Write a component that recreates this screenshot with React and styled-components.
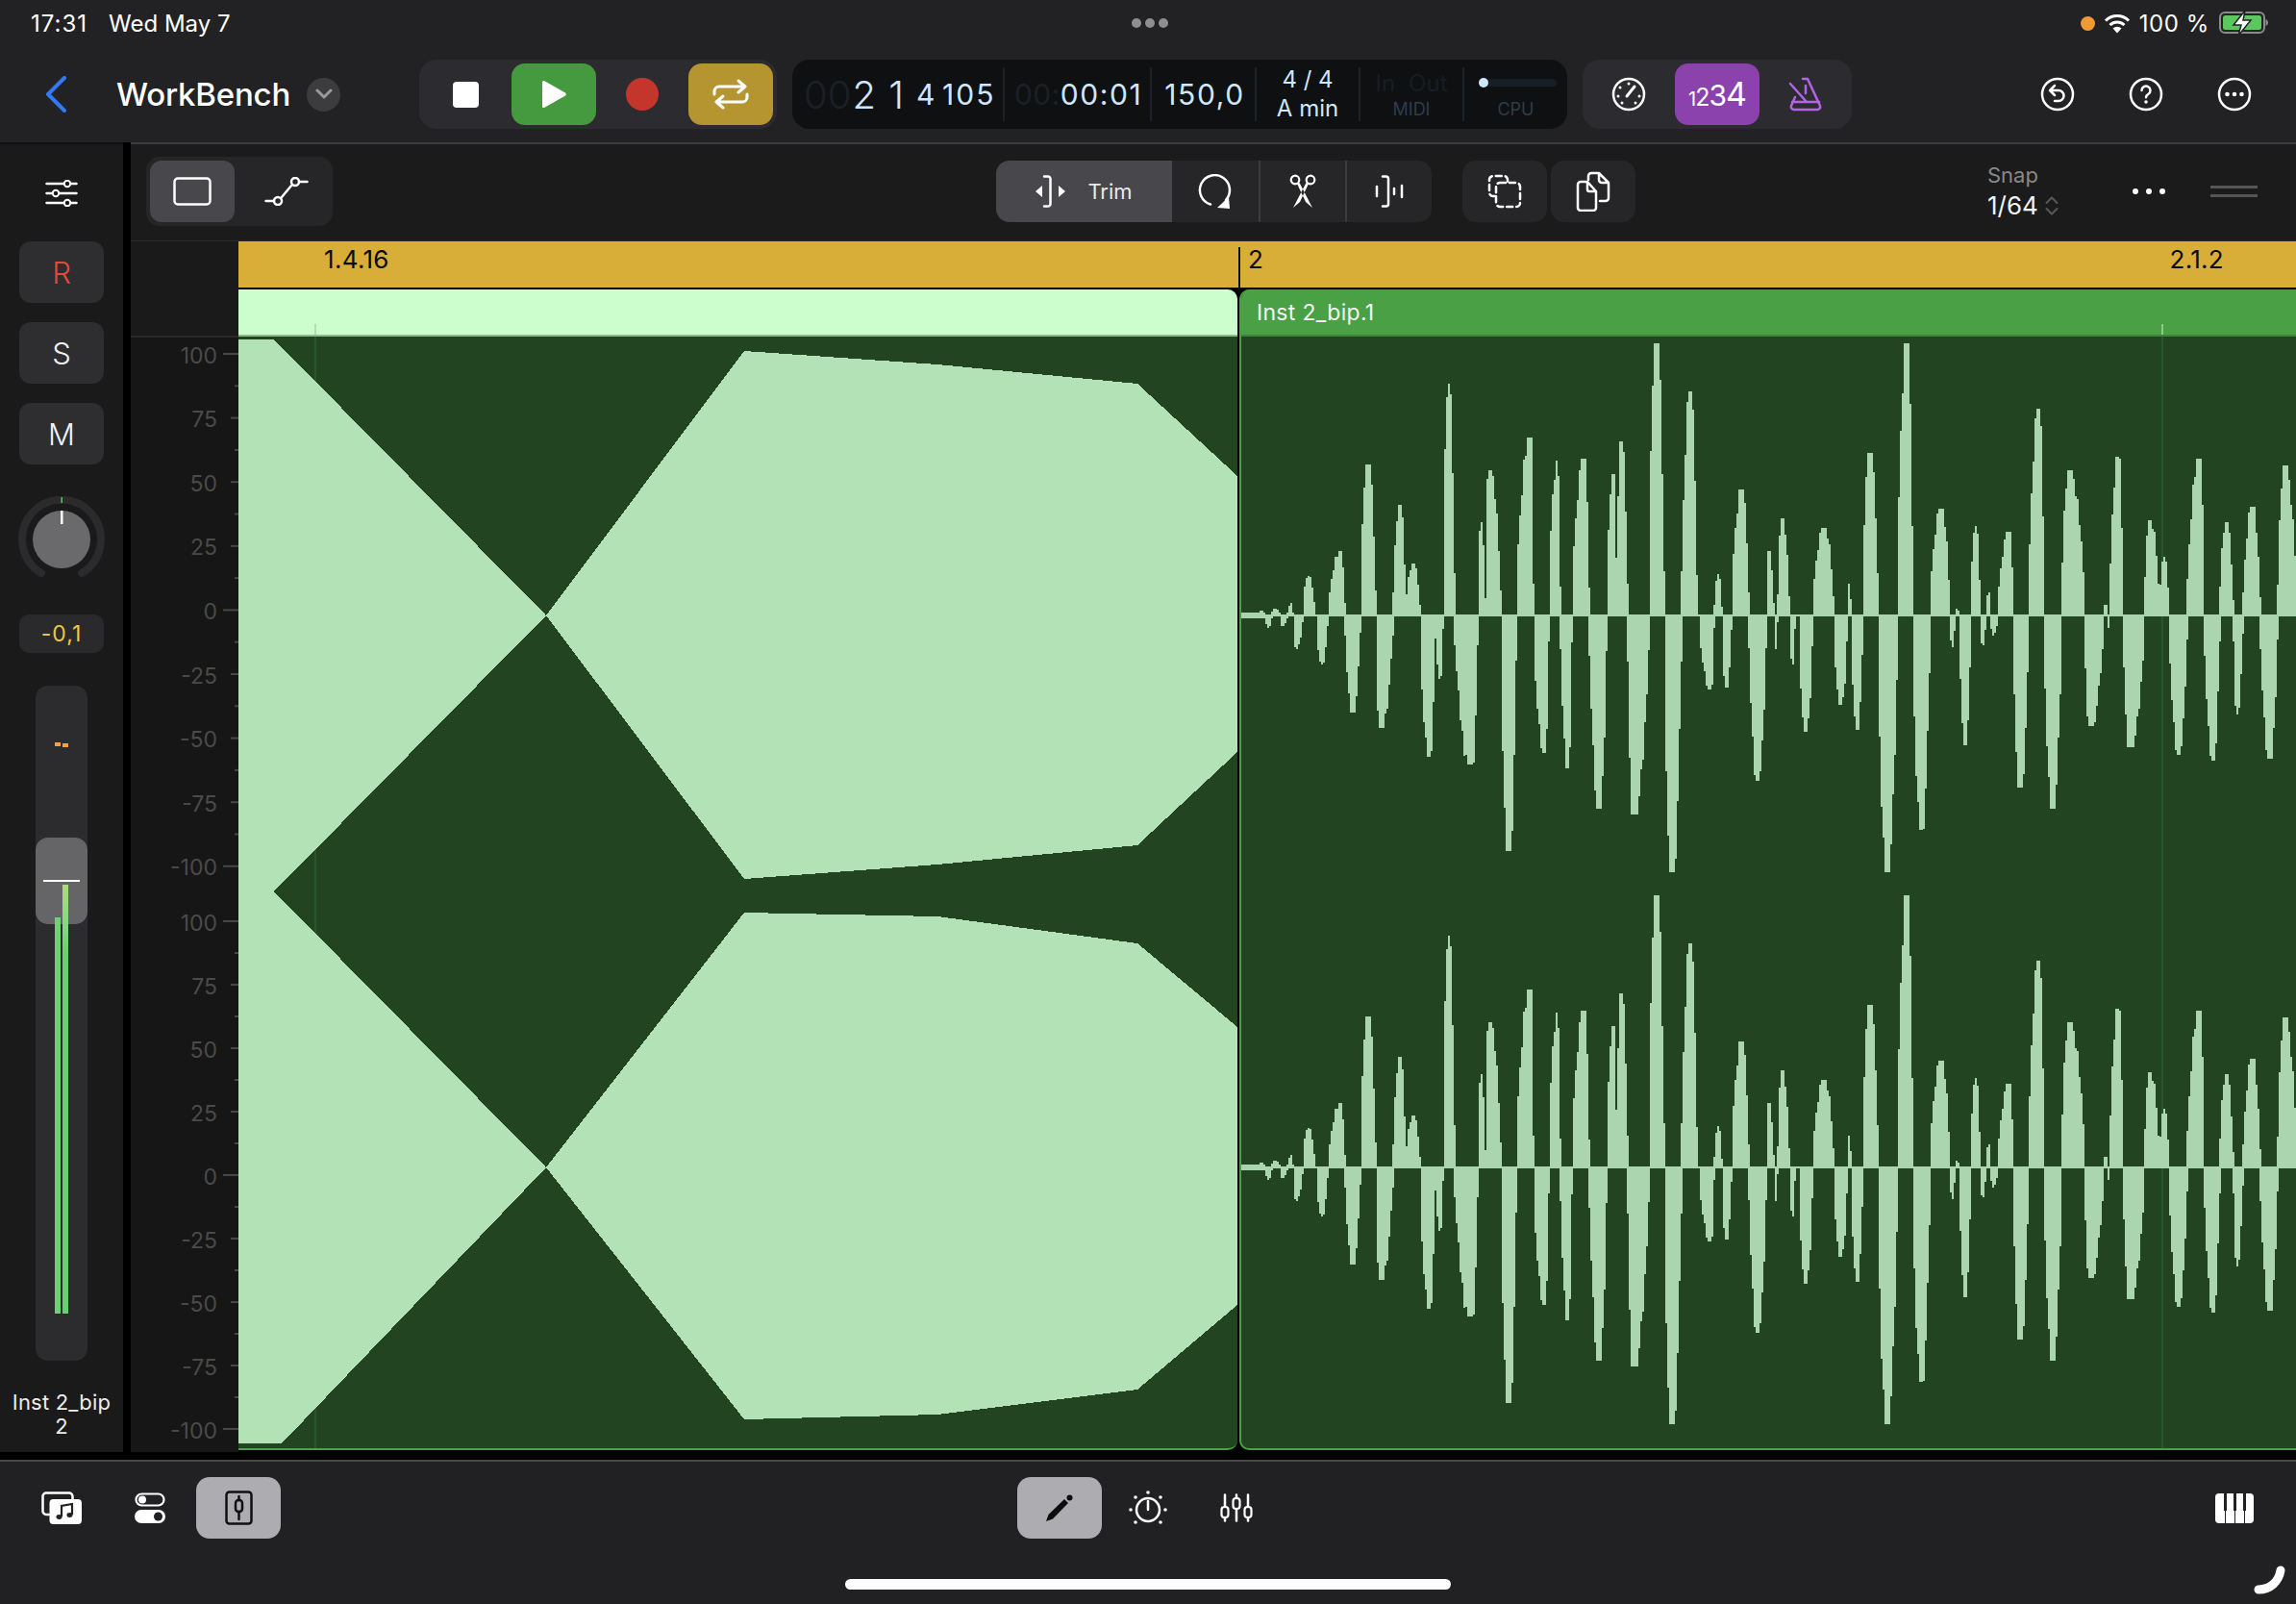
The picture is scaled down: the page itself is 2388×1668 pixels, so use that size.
import React from 'react'
import styled, { createGlobalStyle } from 'styled-components'

const GlobalStyle = createGlobalStyle`
  html, body { margin: 0; padding: 0; background: #000; }
  * { box-sizing: border-box; }
  body { font-family: Inter, "Noto Sans", "Liberation Sans", sans-serif; }
`

const Page = styled.div`
  width: 2388px;
  height: 1668px;
  position: relative;
  overflow: hidden;
  background: #000;
  display: flex;
  flex-direction: column;
  color: #fff;
`

/* ---------- top bar ---------- */
const TopBar = styled.header`
  height: 148px;
  flex: none;
  background: #222224;
`
const StatusRow = styled.div`
  height: 48px;
  padding: 0 28px 0 32px;
  display: grid;
  grid-template-columns: 1fr auto 1fr;
  align-items: center;
  font-size: 24px;
`
const StatusLeft = styled.div`
  display: flex;
  gap: 22px;
`
const StatusTime = styled.span`
  letter-spacing: 1px;
`
const StatusDots = styled.div`
  display: flex;
  gap: 4px;
`
const StatusDot = styled.span`
  width: 10px;
  height: 10px;
  border-radius: 50%;
  background: #8e8e90;
`
const StatusRight = styled.div`
  display: flex;
  justify-content: flex-end;
  align-items: center;
`
const OrangeDot = styled.span`
  width: 15px;
  height: 15px;
  border-radius: 50%;
  background: #f09a36;
  margin-right: 9px;
`
const BatteryPct = styled.span`
  margin: 0 10px 0 9px;
  letter-spacing: 0.6px;
`
const TransportRow = styled.div`
  margin-top: 14px;
  height: 72px;
  display: flex;
  align-items: center;
`
const BackButton = styled.div`
  width: 22px;
  margin-left: 47px;
  display: flex;
`
const Title = styled.div`
  margin-left: 52px;
  font-size: 33px;
  font-weight: 500;
  letter-spacing: -0.2px;
  width: 198px;
`
const RoundCaret = styled.div`
  width: 35px;
  height: 35px;
  border-radius: 50%;
  background: #3c3c3f;
  display: flex;
  align-items: center;
  justify-content: center;
`
const ToolGroup = styled.div`
  height: 72px;
  margin-left: ${p => p.$ml || 0}px;
  padding: 4px;
  display: flex;
  gap: 4px;
  background: #2c2c30;
  border-radius: 18px;
`
const TransportButton = styled.div`
  width: 88px;
  height: 64px;
  border-radius: 14px;
  display: flex;
  align-items: center;
  justify-content: center;
  background: ${p => p.$bg || 'transparent'};
`
const Counter = styled.span`
  display: flex;
  align-items: baseline;
  font-size: 34px;
  letter-spacing: -1px;
  line-height: 1;
`
const CounterDigit = styled.span`
  font-size: ${p => p.$size}px;
  font-weight: 400;
`
const Lcd = styled.div`
  margin-left: 16px;
  width: 806px;
  height: 72px;
  background: #0f1012;
  border-radius: 18px;
  display: flex;
  align-items: center;
  color: #cfe6fb;
`
const LcdCell = styled.div`
  width: ${p => p.$w}px;
  height: 56px;
  flex: none;
  padding-left: ${p => p.$pl || 0}px;
  display: flex;
  align-items: center;
  justify-content: ${p => (p.$center ? 'center' : 'flex-start')};
  border-right: ${p => (p.$last ? 'none' : '2px solid #1b222a')};
`
const LcdText = styled.span`
  font-size: ${p => p.$size || 30}px;
  color: ${p => (p.$dim ? '#1b2027' : '#cfe6fb')};
  margin-left: ${p => p.$ml || 0}px;
  letter-spacing: ${p => p.$ls ?? 1.6}px;
  word-spacing: ${p => p.$ws || 0}px;
  white-space: pre;
  font-weight: ${p => p.$weight || 400};
`
const LcdStack = styled.div`
  display: flex;
  flex-direction: column;
  align-items: center;
  gap: 2px;
  font-size: 24px;
  line-height: 28px;
  white-space: pre;
`
const MeterStack = styled.div`
  display: flex;
  flex-direction: column;
  align-items: center;
  width: 100%;
`
const MeterTop = styled.div`
  height: 32px;
  font-size: 24px;
  color: #181d23;
  display: flex;
  align-items: center;
  gap: 14px;
`
const CpuBar = styled.div`
  width: 78px;
  height: 8px;
  border-radius: 4px;
  background: #181e25;
  margin-left: 6px;
  position: relative;
`
const CpuDot = styled.span`
  position: absolute;
  left: -3px;
  top: -1px;
  width: 10px;
  height: 10px;
  border-radius: 50%;
  background: #cfe6fb;
`
const MeterLabel = styled.div`
  font-size: 18px;
  line-height: 24px;
  color: #2d3d50;
`
const RoundIcons = styled.div`
  margin-left: 170px;
  display: flex;
  gap: 4px;
`

/* ---------- middle ---------- */
const Main = styled.div`
  height: 1362px;
  flex: none;
  display: flex;
  gap: 8px;
`
const Strip = styled.aside`
  width: 128px;
  flex: none;
  background: #1a1a1b;
  border-top: 2px solid #111;
  display: flex;
  flex-direction: column;
  align-items: center;
`
const StripIcon = styled.div`
  margin-top: 37px;
  display: flex;
`
const ChannelButton = styled.div`
  width: 88px;
  height: 64px;
  margin-top: ${p => p.$mt}px;
  border-radius: 12px;
  background: #2e2e30;
  display: flex;
  align-items: center;
  justify-content: center;
  font-size: 31px;
  font-weight: 300;
  color: ${p => p.$color || '#f2f2f2'};
`
const KnobBox = styled.div`
  margin-top: 33px;
  display: flex;
`
const ValueBox = styled.div`
  margin-top: 33px;
  width: 88px;
  height: 40px;
  border-radius: 10px;
  background: #2a2a2c;
  color: #e9c93d;
  font-size: 23px;
  letter-spacing: 1px;
  display: flex;
  align-items: center;
  justify-content: center;
`
const Fader = styled.div`
  margin-top: 34px;
  width: 54px;
  height: 702px;
  border-radius: 13px;
  background: #2c2c2e;
  position: relative;
`
const PeakMark = styled.span`
  position: absolute;
  left: ${p => p.$x}px;
  top: ${p => p.$y}px;
  width: 6px;
  height: 4px;
  background: #f5a23c;
`
const MeterBar = styled.span`
  position: absolute;
  left: ${p => p.$x}px;
  top: ${p => p.$top}px;
  bottom: 49px;
  width: 6px;
  background: ${p => (p.$hot ? 'linear-gradient(#aade78, #82d884 44px, #69d06f 70px)' : '#6dd273')};
`
const FaderThumb = styled.div`
  position: absolute;
  left: 0;
  right: 0;
  top: 158px;
  height: 90px;
  border-radius: 13px;
  background: rgba(112, 112, 114, 0.85);
`
const ThumbLine = styled.span`
  position: absolute;
  left: 8px;
  top: 202px;
  width: 38px;
  height: 2px;
  background: #fff;
`
const ChannelName = styled.div`
  margin-top: 31px;
  font-size: 22px;
  line-height: 25px;
  text-align: center;
  color: #ececec;
  letter-spacing: 0.2px;
`

const Editor = styled.section`
  flex: 1;
  min-width: 0;
  display: flex;
  flex-direction: column;
  background: #000;
`
const EditToolbar = styled.div`
  height: 103px;
  flex: none;
  background: #1b1b1c;
  border-top: 2px solid #3c3c3e;
  border-bottom: 1px solid #2a2a2a;
  padding: 0 0 2px 16px;
  display: flex;
  align-items: center;
`
const SegGroup = styled.div`
  height: ${p => p.$h || 64}px;
  margin-left: ${p => p.$ml || 0}px;
  padding: ${p => p.$pad || 0}px;
  display: flex;
  background: #262628;
  border-radius: 14px;
  overflow: hidden;
`
const SegButton = styled.div`
  width: ${p => p.$w || 88}px;
  height: 100%;
  flex: none;
  padding-left: ${p => p.$pl || 0}px;
  display: flex;
  align-items: center;
  justify-content: center;
  gap: ${p => p.$gap || 0}px;
  background: ${p => (p.$active ? '#48484c' : 'transparent')};
  border-radius: ${p => p.$radius || 0}px;
  border-left: ${p => (p.$divider ? '2px solid #3c3c3f' : 'none')};
  font-size: 22px;
  color: #e8e8e8;
`
const Snap = styled.div`
  margin-left: 366px;
  width: 151px;
  display: flex;
  flex-direction: column;
`
const SnapLabel = styled.div`
  font-size: 22px;
  line-height: 30px;
  color: #88888c;
`
const SnapValue = styled.div`
  font-size: 26px;
  line-height: 34px;
  color: #f2f2f2;
  display: flex;
  align-items: center;
  gap: 7px;
`
const MoreDots = styled.div`
  display: flex;
  gap: 8px;
`
const MoreDot = styled.span`
  width: 6px;
  height: 6px;
  border-radius: 50%;
  background: #fff;
`
const Grip = styled.div`
  margin-left: 47px;
  width: 49px;
  height: 12px;
  border-top: 3px solid #555;
  border-bottom: 3px solid #555;
`
const TrackArea = styled.div`
  flex: 1;
  min-height: 0;
  display: flex;
`
const AxisColumn = styled.div`
  width: 112px;
  flex: none;
  display: flex;
  flex-direction: column;
  background: #161616;
`
const AxisHead = styled.div`
  height: 100px;
  flex: none;
  background: #1a1a1a;
  border-bottom: 2px solid #2a2a2a;
`
const Lanes = styled.div`
  flex: 1;
  min-width: 0;
  display: flex;
  flex-direction: column;
`
const Ruler = styled.div`
  height: 48px;
  flex: none;
  background: #d9ae38;
  display: flex;
  color: #0a0a0a;
  font-size: 26px;
  letter-spacing: 0.3px;
`
const RulerPart = styled.div`
  width: ${p => (p.$w ? `${p.$w}px` : 'auto')};
  flex: ${p => (p.$w ? 'none' : 1)};
  padding: 3px 75px 0 ${p => p.$pl}px;
  display: flex;
  justify-content: space-between;
  position: relative;
  &::before {
    content: ${p => (p.$tick ? '""' : 'none')};
    position: absolute;
    left: 0;
    top: 6px;
    bottom: -2px;
    width: 2px;
    background: #111;
  }
`
const Regions = styled.div`
  margin-top: 2px;
  height: 1207px;
  flex: none;
  display: flex;
  gap: 2px;
`
const Region = styled.div`
  width: ${p => (p.$w ? `${p.$w}px` : 'auto')};
  flex: ${p => (p.$w ? 'none' : 1)};
  min-width: 0;
  display: flex;
  flex-direction: column;
  background: #224421;
  border-left: ${p => (p.$edge ? '2px solid #4aa044' : 'none')};
  border-bottom: 2px solid #4aa044;
  border-radius: ${p => (p.$edge ? '10px 0 0 10px' : '0 10px 10px 0')};
  overflow: hidden;
`
const RegionHead = styled.div`
  height: 49px;
  flex: none;
  position: relative;
  background: ${p => p.$bg};
  border-bottom: 2px solid ${p => p.$line};
  padding-left: 16px;
  display: flex;
  align-items: center;
  font-size: 23px;
  letter-spacing: 0.3px;
  color: #f4f4f4;
`
const HeadTick = styled.span`
  position: absolute;
  left: ${p => p.$x}px;
  bottom: 0;
  width: 2px;
  height: 11px;
  background: ${p => p.$color};
`
const WaveSvg = styled.svg`
  display: block;
  flex: none;
`

/* ---------- bottom bar ---------- */
const BottomBar = styled.footer`
  margin-top: 8px;
  flex: 1;
  background: #212123;
  border-top: 2px solid #48484a;
  padding: 16px 20px 0;
  display: flex;
  align-items: flex-start;
`
const BottomGroup = styled.div`
  display: flex;
  gap: 4px;
  margin-left: ${p => (p.$auto ? 'auto' : `${p.$ml || 0}px`)};
`
const BottomButton = styled.div`
  width: 88px;
  height: 64px;
  border-radius: 14px;
  display: flex;
  align-items: center;
  justify-content: center;
  background: ${p => (p.$active ? '#adadb1' : 'transparent')};
`
const HomeIndicator = styled.div`
  position: absolute;
  left: 879px;
  top: 1642px;
  width: 630px;
  height: 11px;
  border-radius: 6px;
  background: #fff;
`
const CornerMark = styled.svg`
  position: absolute;
  left: 2340px;
  top: 1622px;
`

/* ---------- waveforms ---------- */
const SCALE = 2.8
const MID_UP = 838
const MID_DOWN = 842

// [left, right, peak, extreme], read off the crops in their own pixels
const UP_A = [
  [80, 100, 90, 826], [118, 142, 130, 820], [165, 182, 178, 805], [210, 245, 226, 725], [285, 332, 322, 652],
  [378, 422, 400, 400], [473, 510, 492, 518], [510, 552, 530, 690], [619, 652, 635, 165], [720, 742, 730, 570],
  [742, 787, 752, 418], [832, 882, 875, 322], [927, 960, 952, 390], [994, 1044, 1032, 385],
  [1095, 1124, 1116, 430], [1124, 1156, 1138, 333], [1218, 1262, 1240, 48], [1313, 1358, 1340, 188],
  [1408, 1431, 1420, 720], [1459, 1509, 1490, 473],
]
const DOWN_A = [
  [100, 120, 112, 875], [143, 165, 150, 870], [182, 210, 192, 937], [250, 283, 265, 982], [333, 378, 355, 1122],
  [423, 473, 435, 1167], [552, 596, 578, 1250], [596, 619, 610, 1025], [652, 720, 702, 1273], [787, 832, 810, 1525],
  [882, 927, 915, 1240], [960, 994, 982, 1285], [1044, 1095, 1075, 1402], [1156, 1218, 1172, 1418],
  [1263, 1313, 1284, 1588], [1364, 1408, 1400, 1055], [1431, 1459, 1443, 1048], [1509, 1560, 1535, 1322],
]
const UP_B = [
  [20, 42, 28, 652], [53, 87, 65, 557], [155, 216, 190, 585], [256, 267, 262, 748], [301, 346, 320, 367],
  [402, 447, 430, 48], [497, 554, 530, 530], [570, 582, 575, 820], [615, 643, 630, 580], [660, 672, 668, 770],
  [694, 739, 730, 597], [784, 829, 815, 238], [880, 947, 900, 417], [1003, 1014, 1008, 804], [1020, 1059, 1045, 378],
  [1121, 1165, 1136, 563], [1165, 1193, 1178, 670], [1245, 1295, 1283, 385], [1340, 1380, 1358, 568],
  [1408, 1458, 1436, 524], [1509, 1565, 1528, 405],
]
const DOWN_B = [
  [42, 53, 48, 937], [87, 104, 98, 982], [115, 155, 135, 1178], [216, 256, 238, 1100], [267, 301, 285, 1172],
  [346, 402, 370, 1588], [447, 497, 470, 1463], [554, 570, 562, 932], [582, 615, 600, 1217], [643, 660, 650, 926],
  [672, 694, 682, 897], [739, 784, 758, 1340], [829, 880, 853, 1402], [947, 1003, 960, 1162], [1014, 1020, 1017, 875],
  [1059, 1121, 1078, 1223], [1193, 1245, 1222, 1245], [1295, 1340, 1322, 1263], [1380, 1408, 1390, 1128],
  [1458, 1509, 1487, 1256],
]

const spikePath = ([l, r, p, ext], x0, dir) => {
  const left = x0 + l / SCALE
  const right = x0 + r / SCALE
  const peak = x0 + p / SCALE
  const amp = dir < 0 ? (MID_UP - ext) / SCALE : (ext - MID_DOWN) / SCALE
  let d = ''
  let i = 0
  for (let x = Math.round(left / 2) * 2; x < right - 0.5; x += 2, i++) {
    const t = x + 1 < peak ? (peak - x - 1) / Math.max(peak - left, 1) : (x + 1 - peak) / Math.max(right - peak, 1)
    const drop = t < 0.3 ? 0 : Math.pow((Math.min(t, 1) - 0.3) / 0.7, 1.6) * 0.82
    const wobble = t < 0.3 ? 1 : 1 - ((i * 7) % 5) * 0.03
    const h = Math.max(2, Math.round(amp * (1 - drop) * wobble))
    d += dir < 0 ? `M${x} 639V${639 - h}H${x + 2}V639Z` : `M${x} 641V${641 + h}H${x + 2}V641Z`
  }
  return d
}

const WAVE_PATH = [
  ...UP_A.map(s => spikePath(s, 1280, -1)),
  ...DOWN_A.map(s => spikePath(s, 1280, 1)),
  ...UP_B.map(s => spikePath(s, 1830, -1)),
  ...DOWN_B.map(s => spikePath(s, 1830, 1)),
].join('') + 'M1291 639H2388V641H1291ZM1291 637H1316V643H1291Z'

const AudioWave = () => (
  <WaveSvg width="1097" height="1156" viewBox="1291 350 1097 1156" shapeRendering="crispEdges">
    <rect x="2248" y="350" width="2" height="1156" fill="#2b552a" />
    <path d={WAVE_PATH} fill="#abd5af" />
    <path d={WAVE_PATH} fill="#abd5af" transform="translate(0 574)" />
  </WaveSvg>
)

const SelectedWave = () => (
  <WaveSvg width="1039" height="1156" viewBox="248 350 1039 1156" shapeRendering="crispEdges">
    <rect x="327" y="350" width="2" height="1156" fill="#2b552a" />
    <g fill="#b2e2b5">
      <polygon points="248,353 285,353 568,640 285,927 568,1214 293,1501 248,1501" />
      <polygon points="568,640 774,365 975,379 1183,399 1287,495 1287,782 1183,879 975,899 774,914" />
      <polygon points="568,1214 774,949 975,953 1183,981 1287,1068 1287,1357 1183,1445 975,1471 774,1476" />
    </g>
  </WaveSvg>
)

const AXIS_LABELS = [100, 75, 50, 25, 0, -25, -50, -75, -100]

const AxisBlock = ({ top, step }) => (
  <g>
    {AXIS_LABELS.map((v, i) => {
      const y = top + i * step
      const major = v === 100 || v === 0 || v === -100
      return (
        <g key={v}>
          <line x1={major ? 232 : 240} x2="248" y1={y} y2={y} stroke="#474747" strokeWidth="2" />
          {i < 8 && <line x1="244" x2="248" y1={y + step / 2} y2={y + step / 2} stroke="#474747" strokeWidth="2" />}
          <text x="226" y={y + 9.500} textAnchor="end" fontSize="23" fill="#4a4a4a" fontFamily="Inter, sans-serif">{v}</text>
        </g>
      )
    })}
  </g>
)

const Axis = () => (
  <svg width="112" height="1158" viewBox="136 352 112 1158" style={{ display: 'block' }}>
    <AxisBlock top={369} step={66.6} />
    <AxisBlock top={959} step={66} />
  </svg>
)

/* ---------- icons ---------- */
const line = { fill: 'none', stroke: 'currentColor', strokeLinecap: 'round', strokeLinejoin: 'round' }

const BackIcon = () => (
  <svg width="22" height="38" viewBox="0 0 22 38" color="#3478f6"><path {...line} strokeWidth="4" d="M20 2 3 19l17 17" /></svg>
)
const CaretIcon = () => (
  <svg width="18" height="12" viewBox="0 0 18 12" color="#9a9a9e"><path {...line} strokeWidth="3" d="m2 2 7 7 7-7" /></svg>
)
const StopIcon = () => <svg width="27" height="27" viewBox="0 0 27 27"><rect width="27" height="27" rx="4" fill="#fff" /></svg>
const PlayIcon = () => (
  <svg width="28" height="30" viewBox="0 0 28 30"><path d="M2 2.500v25c0 1.500 1.400 2 2.500 1.200L26 16.500c1-.7 1-2.300 0-3L4.500 1.300C3.400.500 2 1 2 2.500Z" fill="#fff" /></svg>
)
const RecordDot = () => <svg width="34" height="34" viewBox="0 0 34 34"><circle cx="17" cy="17" r="17" fill="#c4352b" /></svg>
const LoopIcon = () => (
  <svg width="38" height="32" viewBox="0 0 38 32" color="#fff">
    <path {...line} strokeWidth="3" d="M2 16v-3a5 5 0 0 1 5-5h27M27 2l7 6-7 6M36 16v3a5 5 0 0 1-5 5H4M11 18l-7 6 7 6" />
  </svg>
)
const GaugeIcon = () => (
  <svg width="36" height="36" viewBox="0 0 36 36" color="#fff">
    <circle {...line} cx="18" cy="18" r="16" strokeWidth="2.500" />
    <path {...line} strokeWidth="3" d="M16 20 24 10" />
    <g fill="#fff">
      <circle cx="18" cy="7" r="1.500" /><circle cx="9" cy="11" r="1.500" /><circle cx="7" cy="20" r="1.500" />
      <circle cx="11" cy="27" r="1.500" /><circle cx="25" cy="27" r="1.500" /><circle cx="29" cy="20" r="1.500" />
    </g>
  </svg>
)
const MetronomeIcon = () => (
  <svg width="36" height="36" viewBox="0 0 36 36" color="#b264e6">
    <path {...line} strokeWidth="2.500" d="M15 2h5l13 28a3 3 0 0 1-3 4H6a3 3 0 0 1-3-4L7 21" />
    <path {...line} strokeWidth="2.500" d="M4 26h28M2 7l17 19M18 9v8" />
  </svg>
)
const UndoIcon = () => (
  <svg width="36" height="36" viewBox="0 0 36 36" color="#fff">
    <circle {...line} cx="18" cy="18" r="16" strokeWidth="2.500" />
    <path {...line} strokeWidth="2.500" d="m15 9-5 5 5 5M10 14h9a5.500 5.500 0 0 1 0 11h-4" />
  </svg>
)
const HelpIcon = () => (
  <svg width="36" height="36" viewBox="0 0 36 36" color="#fff">
    <circle {...line} cx="18" cy="18" r="16" strokeWidth="2.500" />
    <path {...line} strokeWidth="2.500" d="M13.500 14a4.500 4.500 0 1 1 7 3.800c-1.600 1-2.500 1.800-2.500 3.400" />
    <circle cx="18" cy="26" r="1.800" fill="#fff" />
  </svg>
)
const MoreIcon = () => (
  <svg width="36" height="36" viewBox="0 0 36 36" color="#fff">
    <circle {...line} cx="18" cy="18" r="16" strokeWidth="2.500" />
    <g fill="#fff"><circle cx="10.500" cy="18" r="2.300" /><circle cx="18" cy="18" r="2.300" /><circle cx="25.500" cy="18" r="2.300" /></g>
  </svg>
)
const WifiIcon = () => (
  <svg width="28" height="21" viewBox="0 0 28 21" color="#fff">
    <path {...line} strokeLinecap="butt" strokeWidth="3" d="M2 7.500a17 17 0 0 1 24 0M6.500 12a11 11 0 0 1 15 0" />
    <path d="M14 20.500 9.500 15.500a6.500 6.500 0 0 1 9 0Z" fill="#fff" />
  </svg>
)
const BatteryIcon = () => (
  <svg width="52" height="26" viewBox="0 0 52 26">
    <rect x="1" y="2" width="46" height="21" rx="5" fill="none" stroke="#8a8a8c" strokeWidth="2" />
    <rect x="4" y="5" width="40" height="15" rx="2.500" fill="#5cc75e" />
    <path d="M48.500 9v7c1.500-.5 2.500-2 2.500-3.500S50 9.500 48.500 9Z" fill="#8a8a8c" />
    <path d="M27 0 15 15h8l-3 11 13-16h-8l2-10Z" fill="#fff" stroke="#222224" strokeWidth="1.500" />
  </svg>
)
const SlidersIcon = () => (
  <svg width="34" height="28" viewBox="0 0 34 28" color="#fff">
    <path {...line} strokeWidth="2.500" d="M1.500 4h31M1.500 14h31M1.500 24h31" />
    <g fill="#1a1a1b" stroke="#fff" strokeWidth="2">
      <circle cx="23" cy="4" r="3.200" /><circle cx="11" cy="14" r="3.200" /><circle cx="23" cy="24" r="3.200" />
    </g>
  </svg>
)
const Knob = () => (
  <svg width="90" height="90" viewBox="0 0 90 90">
    <path d="M24 80A41 41 0 1 1 66 80" fill="none" stroke="#2b2b2d" strokeWidth="8" strokeLinecap="round" />
    <circle cx="45" cy="45" r="30" fill="#6a6a6c" />
    <rect x="44" y="15" width="2.500" height="14" fill="#fff" />
    <rect x="44.500" y="1" width="1.500" height="6" fill="#5ac85a" />
  </svg>
)
const RectIcon = () => (
  <svg width="40" height="30" viewBox="0 0 40 30" color="#fff"><rect {...line} x="1.500" y="1.500" width="37" height="27" rx="3.500" strokeWidth="2.500" /></svg>
)
const CurveIcon = () => (
  <svg width="46" height="30" viewBox="0 0 46 30" color="#fff">
    <path {...line} strokeWidth="2.500" d="M1.500 25H10M18 21l10-12M36 5h8.500" />
    <circle {...line} cx="14" cy="25" r="4" strokeWidth="2.500" />
    <circle {...line} cx="32" cy="5" r="4" strokeWidth="2.500" />
  </svg>
)
const TrimIcon = () => (
  <svg width="32" height="34" viewBox="0 0 32 34" color="#fff">
    <path {...line} strokeWidth="2.500" d="M9 1.500h4a2.500 2.500 0 0 1 2.500 2.500v26a2.500 2.500 0 0 1-2.500 2.500H9" />
    <path d="M7 11v12l-7-6ZM24 11v12l7-6Z" fill="#fff" />
  </svg>
)
const RotateIcon = () => (
  <svg width="36" height="36" viewBox="0 0 36 36" color="#fff">
    <path {...line} strokeWidth="2.500" d="M13 31.500A15.500 15.500 0 1 1 29 27" />
    <path d="M20 35 32 24l1 12Z" fill="#fff" />
  </svg>
)
const ScissorsIcon = () => (
  <svg width="28" height="36" viewBox="0 0 28 36" color="#fff">
    <circle {...line} cx="6" cy="6" r="4.300" strokeWidth="2.200" />
    <circle {...line} cx="22" cy="6" r="4.300" strokeWidth="2.200" />
    <path d="m8 10 2.500-1L24 35l-7-6ZM20 10l-2.500-1L4 35l7-6Z" fill="#fff" />
  </svg>
)
const SliceIcon = () => (
  <svg width="30" height="34" viewBox="0 0 30 34" color="#fff">
    <path {...line} strokeWidth="2.500" d="M8 1.500h3.500A2.500 2.500 0 0 1 14 4v26a2.500 2.500 0 0 1-2.500 2.500H8M2 12v10M20 14v6M28 11v12" />
  </svg>
)
const DashCopyIcon = () => (
  <svg width="36" height="36" viewBox="0 0 36 36" color="#fff">
    <path {...line} strokeWidth="2.500" strokeDasharray="6 4" d="M8 23H6a4 4 0 0 1-4-4V6a4 4 0 0 1 4-4h11a4 4 0 0 1 4 4v2" />
    <rect {...line} x="9" y="9" width="25" height="25" rx="4" strokeWidth="2.500" strokeDasharray="6 4" />
  </svg>
)
const PasteIcon = () => (
  <svg width="36" height="42" viewBox="0 0 36 42" color="#fff">
    <path {...line} strokeWidth="2.500" d="M13 9V5a3 3 0 0 1 3-3h8l10 10v16a3 3 0 0 1-3 3h-6M24 2v7a3 3 0 0 0 3 3h7" />
    <path {...line} strokeWidth="2.500" d="M2 14a3 3 0 0 1 3-3h7l9 10v17a3 3 0 0 1-3 3H5a3 3 0 0 1-3-3ZM12 11v8a2 2 0 0 0 2 2h7" />
  </svg>
)
const UpDownIcon = () => (
  <svg width="14" height="20" viewBox="0 0 14 20" color="#58585c">
    <path {...line} strokeWidth="2" d="m1.500 7 5.500-5.500L12.500 7M1.500 13 7 18.500 12.500 13" />
  </svg>
)
const MediaIcon = () => (
  <svg width="42" height="34" viewBox="0 0 42 34" color="#fff">
    <path {...line} strokeWidth="2.500" d="M8 24H5a3.500 3.500 0 0 1-3.500-3.500V5A3.500 3.500 0 0 1 5 1.500h24A3.500 3.500 0 0 1 32.500 5v3" />
    <rect x="8.500" y="8" width="33.500" height="26" rx="4" fill="#fff" />
    <path d="M21 26V15l11-2v11" fill="none" stroke="#212123" strokeWidth="2.200" />
    <ellipse cx="18.500" cy="26.500" rx="3" ry="2.400" fill="#212123" />
    <ellipse cx="29.500" cy="24.500" rx="3" ry="2.400" fill="#212123" />
  </svg>
)
const TogglesIcon = () => (
  <svg width="32" height="32" viewBox="0 0 32 32" color="#fff">
    <rect {...line} x="1.500" y="1.500" width="29" height="12" rx="6" strokeWidth="2.200" />
    <circle cx="8" cy="7.500" r="4" fill="#fff" />
    <rect x="0" y="18" width="32" height="14" rx="7" fill="#fff" />
    <circle cx="24.500" cy="25" r="4.500" fill="#212123" />
  </svg>
)
const FaderIcon = () => (
  <svg width="29" height="36" viewBox="0 0 29 36" color="#111">
    <rect {...line} x="1.500" y="1.500" width="26" height="33" rx="3" strokeWidth="2.500" />
    <path {...line} strokeWidth="2.500" d="M14.500 6v4M14.500 22v8" />
    <rect {...line} x="11" y="10" width="7" height="12" rx="3" strokeWidth="2.500" />
  </svg>
)
const PencilIcon = () => (
  <svg width="28" height="28" viewBox="0 0 28 28">
    <path d="M0 28 2.500 21 19 5l4 4L7 25.500Z" fill="#0d0d0d" />
    <circle cx="24.500" cy="3.500" r="3" fill="#0d0d0d" />
  </svg>
)
const TimerKnobIcon = () => (
  <svg width="40" height="36" viewBox="0 0 40 36" color="#fff">
    <circle {...line} cx="20" cy="20" r="12" strokeWidth="2.500" />
    <path {...line} strokeWidth="2.500" d="M20 20v-9" />
    <g fill="#fff">
      <circle cx="20" cy="2" r="1.800" /><circle cx="7" cy="7" r="1.800" /><circle cx="33" cy="7" r="1.800" />
      <circle cx="2" cy="20" r="1.800" /><circle cx="38" cy="20" r="1.800" /><circle cx="7" cy="33" r="1.800" /><circle cx="33" cy="33" r="1.800" />
    </g>
  </svg>
)
const MixerIcon = () => (
  <svg width="34" height="30" viewBox="0 0 34 30" color="#fff">
    <path {...line} strokeWidth="2.500" d="M5 1.500V14M5 25v3.500M17 1.500V5M17 16v12.500M29 1.500V14M29 25v3.500" />
    <rect {...line} x="1.500" y="14" width="7" height="11" rx="3" strokeWidth="2.200" />
    <rect {...line} x="13.500" y="5" width="7" height="11" rx="3" strokeWidth="2.200" />
    <rect {...line} x="25.500" y="14" width="7" height="11" rx="3" strokeWidth="2.200" />
  </svg>
)
const PianoIcon = () => (
  <svg width="40" height="31" viewBox="0 0 40 31">
    <rect width="40" height="31" rx="4" fill="#fff" />
    <path d="M9 0h3v18h-1v13h-1V18H9ZM19 0h3v18h-1v13h-1V18h-1ZM29 0h3v18h-1v13h-1V18h-1Z" fill="#212123" />
  </svg>
)

const App = () => (
  <Page>
    <GlobalStyle />
    <TopBar>
      <StatusRow>
        <StatusLeft><StatusTime>17:31</StatusTime><span>Wed May 7</span></StatusLeft>
        <StatusDots><StatusDot /><StatusDot /><StatusDot /></StatusDots>
        <StatusRight>
          <OrangeDot />
          <WifiIcon />
          <BatteryPct>100 %</BatteryPct>
          <BatteryIcon />
        </StatusRight>
      </StatusRow>
      <TransportRow>
        <BackButton><BackIcon /></BackButton>
        <Title>WorkBench</Title>
        <RoundCaret><CaretIcon /></RoundCaret>
        <ToolGroup $ml={82}>
          <TransportButton><StopIcon /></TransportButton>
          <TransportButton $bg="#45993f"><PlayIcon /></TransportButton>
          <TransportButton><RecordDot /></TransportButton>
          <TransportButton $bg="#b59530"><LoopIcon /></TransportButton>
        </ToolGroup>
        <Lcd>
          <LcdCell $w={221} $pl={12}>
            <LcdText $dim $size={40} $ls={0} $weight={300}>00</LcdText>
            <LcdText $size={40} $ml={1} $ls={0} $weight={300} $ws={2}>2 1</LcdText>
            <LcdText $ml={13} $ls={2.1} $ws={-5}>4 105</LcdText>
          </LcdCell>
          <LcdCell $w={153} $pl={10}>
            <LcdText $dim $ls={0.4}>00:</LcdText>
            <LcdText>00:01</LcdText>
          </LcdCell>
          <LcdCell $w={109} $pl={3} $center><LcdText>150,0</LcdText></LcdCell>
          <LcdCell $w={108} $center>
            <LcdStack><span>4 / 4</span><span>A min</span></LcdStack>
          </LcdCell>
          <LcdCell $w={108}>
            <MeterStack>
              <MeterTop><span>In</span><span>Out</span></MeterTop>
              <MeterLabel>MIDI</MeterLabel>
            </MeterStack>
          </LcdCell>
          <LcdCell $w={107} $last>
            <MeterStack>
              <MeterTop><CpuBar><CpuDot /></CpuBar></MeterTop>
              <MeterLabel>CPU</MeterLabel>
            </MeterStack>
          </LcdCell>
        </Lcd>
        <ToolGroup $ml={16}>
          <TransportButton><GaugeIcon /></TransportButton>
          <TransportButton $bg="#8b42ad">
            <Counter>
              <CounterDigit $size={20}>1</CounterDigit>
              <CounterDigit $size={25}>2</CounterDigit>
              <CounterDigit $size={30}>3</CounterDigit>
              <CounterDigit $size={34}>4</CounterDigit>
            </Counter>
          </TransportButton>
          <TransportButton><MetronomeIcon /></TransportButton>
        </ToolGroup>
        <RoundIcons>
          <TransportButton><UndoIcon /></TransportButton>
          <TransportButton><HelpIcon /></TransportButton>
          <TransportButton><MoreIcon /></TransportButton>
        </RoundIcons>
      </TransportRow>
    </TopBar>

    <Main>
      <Strip>
        <StripIcon><SlidersIcon /></StripIcon>
        <ChannelButton $mt={36} $color="#e5483c">R</ChannelButton>
        <ChannelButton $mt={20}>S</ChannelButton>
        <ChannelButton $mt={20}>M</ChannelButton>
        <KnobBox><Knob /></KnobBox>
        <ValueBox>-0,1</ValueBox>
        <Fader>
          <PeakMark $x={20} $y={59} />
          <PeakMark $x={28} $y={60} />
          <FaderThumb />
          <ThumbLine />
          <MeterBar $x={20} $top={241} />
          <MeterBar $x={28} $top={207} $hot />
        </Fader>
        <ChannelName>Inst 2_bip<br />2</ChannelName>
      </Strip>
      <Editor>
        <EditToolbar>
          <SegGroup $h={72} $pad={4}>
            <SegButton $active $radius={12}><RectIcon /></SegButton>
            <SegButton $w={98} $pl={9}><CurveIcon /></SegButton>
          </SegGroup>
          <SegGroup $ml={690}>
            <SegButton $w={183} $active $gap={22}><TrimIcon /><span>Trim</span></SegButton>
            <SegButton $w={90}><RotateIcon /></SegButton>
            <SegButton $w={90} $divider><ScissorsIcon /></SegButton>
            <SegButton $w={90} $divider><SliceIcon /></SegButton>
          </SegGroup>
          <SegGroup $ml={32}><SegButton><DashCopyIcon /></SegButton></SegGroup>
          <SegGroup $ml={4}><SegButton><PasteIcon /></SegButton></SegGroup>
          <Snap>
            <SnapLabel>Snap</SnapLabel>
            <SnapValue>1/64 <UpDownIcon /></SnapValue>
          </Snap>
          <MoreDots><MoreDot /><MoreDot /><MoreDot /></MoreDots>
          <Grip />
        </EditToolbar>
        <TrackArea>
          <AxisColumn>
            <AxisHead />
            <Axis />
          </AxisColumn>
          <Lanes>
            <Ruler>
              <RulerPart $w={1040} $pl={89}><span>1.4.16</span></RulerPart>
              <RulerPart $tick $pl={10}><span>2</span><span>2.1.2</span></RulerPart>
            </Ruler>
            <Regions>
              <Region $w={1039}>
                <RegionHead $bg="#ccfdcc" $line="#8cbc8c"><HeadTick $x={79} $color="#b4dcb4" /></RegionHead>
                <SelectedWave />
              </Region>
              <Region $edge>
                <RegionHead $bg="#4aa044" $line="#3b8636">
                  Inst 2_bip.1
                  <HeadTick $x={957} $color="#8fc88b" />
                </RegionHead>
                <AudioWave />
              </Region>
            </Regions>
          </Lanes>
        </TrackArea>
      </Editor>
    </Main>

    <BottomBar>
      <BottomGroup>
        <BottomButton><MediaIcon /></BottomButton>
        <BottomButton><TogglesIcon /></BottomButton>
        <BottomButton $active><FaderIcon /></BottomButton>
      </BottomGroup>
      <BottomGroup $ml={766}>
        <BottomButton $active><PencilIcon /></BottomButton>
        <BottomButton><TimerKnobIcon /></BottomButton>
        <BottomButton><MixerIcon /></BottomButton>
      </BottomGroup>
      <BottomGroup $auto>
        <BottomButton><PianoIcon /></BottomButton>
      </BottomGroup>
    </BottomBar>
    <HomeIndicator />
    <CornerMark width="40" height="40" viewBox="0 0 40 40">
      <path d="M9 31c12 0 21-8 23-20" fill="none" stroke="#fff" strokeWidth="9" strokeLinecap="round" />
    </CornerMark>
  </Page>
)

export default App
